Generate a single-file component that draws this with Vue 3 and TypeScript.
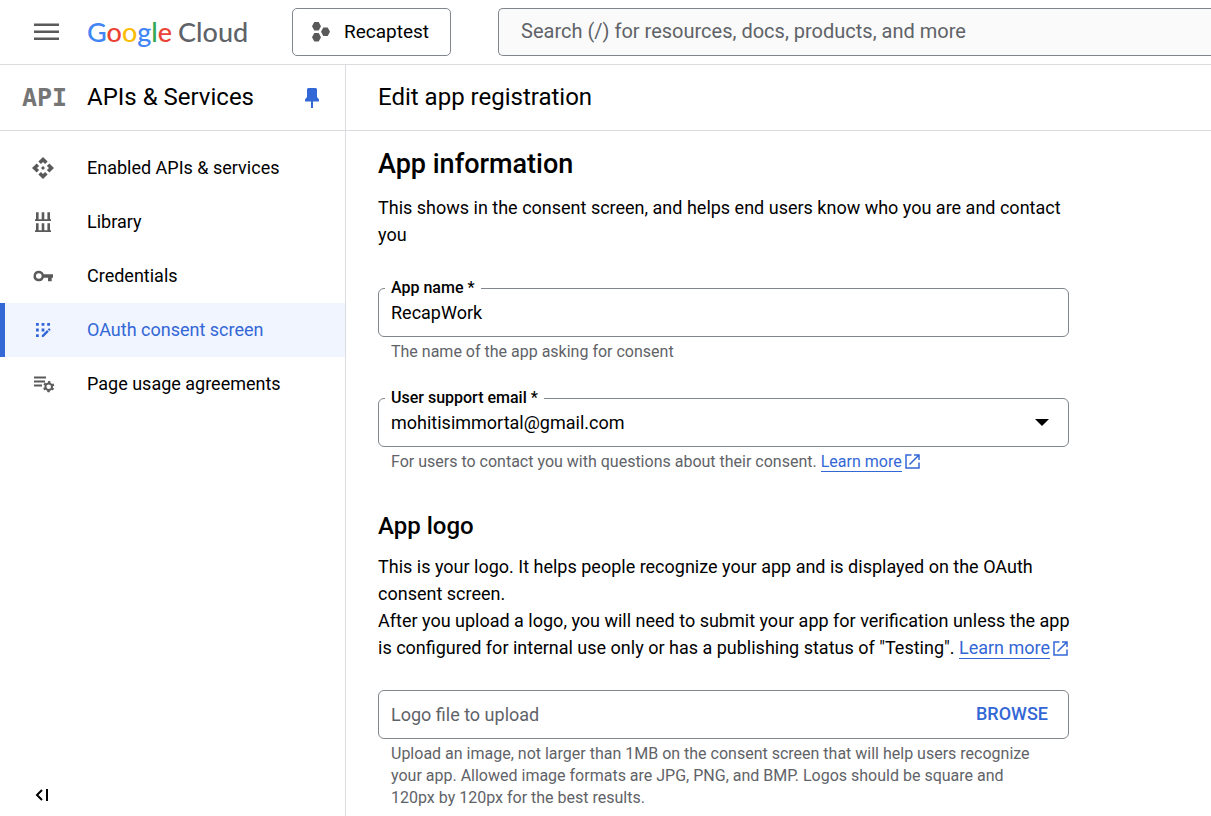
<script setup lang="ts">
import { ref } from 'vue'

interface NavItem {
  id: string
  label: string
}

const navItems: NavItem[] = [
  { id: 'enabled', label: 'Enabled APIs & services' },
  { id: 'library', label: 'Library' },
  { id: 'credentials', label: 'Credentials' },
  { id: 'consent', label: 'OAuth consent screen' },
  { id: 'agreements', label: 'Page usage agreements' },
]

const active = ref('consent')
const search = ref('')
const appName = ref('RecapWork')
const emails: string[] = ['mohitisimmortal@gmail.com']
const supportEmail = ref(emails[0])
const logoFile = ref('')
</script>

<template>
  <div class="page">
    <header class="topbar">
      <button class="icon-button menu" type="button" aria-label="Main menu">
        <svg width="26" height="18" viewBox="0 0 26 18" fill="#5a5a5a">
          <path d="M0 0.500h25v2.500H0zM0 7.500h25V10H0zM0 14.500h25V17H0z" />
        </svg>
      </button>
      <a class="brand" href="#" aria-label="Google Cloud">
        <span class="g-blue">G</span><span class="g-red">o</span><span class="g-yellow">o</span><span class="g-blue">g</span><span class="g-green">l</span><span class="g-red">e</span><span class="cloud">Cloud</span>
      </a>
      <button class="project" type="button">
        <svg width="18" height="20" viewBox="0 0 18 20" fill="#5a5a5a">
          <path d="M2.300 0h4.400L9 4.300 6.700 8.600H2.300L0 4.300zM11.300 5.500h4.400L18 9.800l-2.300 4.300h-4.400L9 9.800zM2.300 10.900h4.400L9 15.200l-2.300 4.300H2.300L0 15.200z" />
        </svg>
        <span>Recaptest</span>
      </button>
      <input v-model="search" class="search" type="search" aria-label="Search" placeholder="Search (/) for resources, docs, products, and more" />
    </header>

    <div class="body">
      <aside class="sidebar">
        <div class="side-head">
          <span class="api-logo" aria-hidden="true">API</span>
          <h2 class="side-title">APIs &amp; Services</h2>
          <button class="icon-button" type="button" aria-label="Unpin section">
            <svg width="16" height="20" viewBox="0 0 16 20" fill="#3367d6">
              <path d="M4.500 0h7Q13 0 13 1.500V9l2 2.500v2H9V20H7v-6.500H1v-2L3 9V1.500Q3 0 4.500 0z" />
            </svg>
          </button>
        </div>

        <nav class="nav" aria-label="APIs and services">
          <a
            v-for="item in navItems"
            :key="item.id"
            href="#"
            class="nav-item"
            :class="{ active: item.id === active }"
            :aria-current="item.id === active ? 'page' : undefined"
            @click.prevent="active = item.id"
          >
            <svg class="nav-icon" width="24" height="24" viewBox="0 0 24 24" fill="currentColor">
              <path v-if="item.id === 'enabled'" d="M14 12l-2 2-2-2 2-2 2 2zm-2-6l2.120 2.120 2.500-2.500L12 1 7.380 5.620l2.500 2.500L12 6zm-6 6l2.120-2.120-2.500-2.500L1 12l4.620 4.620 2.500-2.500L6 12zm12 0l-2.120 2.120 2.500 2.500L23 12l-4.620-4.620-2.500 2.500L18 12zm-6 6l-2.120-2.120-2.500 2.500L12 23l4.620-4.620-2.500-2.500L12 18z" />
              <path v-else-if="item.id === 'library'" d="M5 2.300h2.600v7h3.100v-7h2.600v7h3.100v-7H19v7h1V11H4V9.300h1zM5 13.300h2.600v7h3.100v-7h2.600v7h3.100v-7H19v7h1V22H4v-1.700h1z" />
              <path v-else-if="item.id === 'credentials'" fill-rule="evenodd" d="M7.800 6.700a5.300 5.300 0 0 1 5 3.500H22v3.600h-1.300v3.400H17v-3.400h-4.200a5.300 5.300 0 1 1-5-7.100zM7.800 9.200a2.800 2.800 0 1 0 0 5.600 2.800 2.800 0 0 0 0-5.600z" />
              <g v-else-if="item.id === 'consent'">
                <path d="M5 5h2.800v2.800H5zM10.600 5h2.800v2.800h-2.800zM16.200 5H19v2.800h-2.800zM5 10.600h2.800v2.800H5zM10.600 10.600h2.800v2.800h-2.800zM5 16.200h2.800V19H5z" />
                <path d="M10.800 17.300l5.300-5.300 1.700 1.700-5.300 5.300h-1.700zM16.700 11.400l.9-.9q.5-.5 1 0l.7.7q.5.500 0 1l-.9.900z" />
              </g>
              <g v-else>
                <path d="M3 4.500h12v2H3zM3 8.500h11v2H3zM3 12.500h8v2H3z" />
                <circle cx="17.700" cy="14.700" r="3.300" fill="none" stroke="currentColor" stroke-width="2" />
                <circle cx="17.700" cy="14.700" r="4.700" fill="none" stroke="currentColor" stroke-width="1.800" stroke-dasharray="2.400 2.522" transform="rotate(15 17.700 14.700)" />
              </g>
            </svg>
            <span class="nav-label">{{ item.label }}</span>
          </a>
        </nav>

        <button class="icon-button collapse" type="button" aria-label="Collapse navigation">
          <svg width="14" height="12" viewBox="0 0 14 12" fill="none" stroke="#000" stroke-width="2">
            <path d="M7 1L2 6l5 5M12 0v12" />
          </svg>
        </button>
      </aside>

      <main class="main">
        <h1 class="page-title">Edit app registration</h1>
        <form class="content" @submit.prevent>
          <h2 class="section-title">App information</h2>
          <p class="text">This shows in the consent screen, and helps end users know who you are and contact you</p>

          <div class="field first">
            <label class="floating" for="app-name">App name *</label>
            <input id="app-name" v-model="appName" class="control" type="text" aria-describedby="app-name-hint" />
          </div>
          <p id="app-name-hint" class="hint">The name of the app asking for consent</p>

          <div class="field second">
            <label class="floating" for="support-email">User support email *</label>
            <select id="support-email" v-model="supportEmail" class="control" aria-describedby="email-hint">
              <option v-for="email in emails" :key="email" :value="email">{{ email }}</option>
            </select>
            <svg class="caret" width="14" height="7" viewBox="0 0 14 7"><path d="M0 0h14L7 7z" /></svg>
          </div>
          <p id="email-hint" class="hint">
            For users to contact you with questions about their consent.
            <a class="link" href="#"><span>Learn more</span><svg class="external" width="15" height="15" viewBox="0 0 15 15" fill="none" stroke="currentColor" stroke-width="1.500"><path d="M6.500 1H1v13h13V8.500M9 1h5v5M14 1L4.500 10.500" /></svg></a>
          </p>

          <h3 class="sub-title">App logo</h3>
          <p class="text">
            This is your logo. It helps people recognize your app and is displayed on the OAuth consent screen.<br />
            After you upload a logo, you will need to submit your app for verification unless the app is configured for internal use only or has a publishing status of "Testing".
            <a class="link" href="#"><span>Learn more</span><svg class="external" width="15" height="15" viewBox="0 0 15 15" fill="none" stroke="currentColor" stroke-width="1.500"><path d="M6.500 1H1v13h13V8.500M9 1h5v5M14 1L4.500 10.500" /></svg></a>
          </p>

          <div class="field upload">
            <input v-model="logoFile" class="control" type="text" aria-label="Logo file to upload" placeholder="Logo file to upload" aria-describedby="logo-hint" />
            <button class="browse" type="button">BROWSE</button>
          </div>
          <p id="logo-hint" class="hint">
            Upload an image, not larger than 1MB on the consent screen that will help users recognize your app. Allowed image formats are JPG, PNG, and BMP. Logos should be square and 120px by 120px for the best results.
          </p>
        </form>
      </main>
    </div>
  </div>
</template>

<style>
html,
body {
  margin: 0;
}
</style>

<style scoped>
.page {
  display: flex;
  flex-direction: column;
  min-height: 100vh;
  background: #fff;
  color: #000;
  font-family: Roboto, 'Liberation Sans', sans-serif;
  font-size: 18px;
}

.page * {
  box-sizing: border-box;
}

button,
input,
select {
  font: inherit;
  color: inherit;
}

.icon-button {
  display: flex;
  padding: 0;
  border: 0;
  background: none;
}

.topbar {
  display: flex;
  align-items: center;
  flex: none;
  height: 65px;
  padding-left: 34px;
  border-bottom: 1px solid #dadce0;
}

.menu {
  width: 53px;
}

.brand {
  width: 205px;
  font-family: Lato, sans-serif;
  font-size: 27px;
  line-height: 36px;
  text-decoration: none;
  white-space: nowrap;
}

.g-blue { color: #4285f4; }
.g-red { color: #ea4335; }
.g-yellow { color: #fbbc04; }
.g-green { color: #34a853; }
.brand span { font-weight: 500; }
.cloud {
  margin-left: 6px;
  color: #5f6368;
}

.project {
  display: flex;
  align-items: center;
  gap: 14px;
  height: 48px;
  margin-right: 47px;
  padding: 0 21px 0 19px;
  border: 1px solid #80868b;
  border-radius: 5px;
  background: #fff;
  font-size: 19px;
}

.project span,
.nav-label {
  padding-bottom: 2px;
}

.search {
  flex: 1;
  min-width: 0;
  height: 48px;
  padding: 0 22px 2px;
  border: 1px solid #80868b;
  border-right: 0;
  border-radius: 5px 0 0 5px;
  background: #fafafa;
  font-size: 20px;
  outline: 0;
}

.search::placeholder,
.control::placeholder {
  color: #5f6368;
  opacity: 1;
}

.body {
  display: flex;
  flex: 1;
}

.sidebar {
  display: flex;
  flex-direction: column;
  flex: none;
  width: 346px;
  border-right: 1px solid #dadce0;
}

.side-head {
  display: flex;
  align-items: center;
  height: 66px;
  padding: 0 25px 0 22px;
  border-bottom: 1px solid #dadce0;
}

.api-logo {
  width: 65px;
  color: #757575;
  font-family: 'DejaVu Sans Mono', monospace;
  font-size: 25px;
  font-weight: 700;
}

.side-title {
  flex: 1;
  margin: 0;
  padding-bottom: 2px;
  font-size: 24px;
  font-weight: 400;
}

.nav {
  padding-top: 10px;
}

.nav-item {
  display: flex;
  align-items: center;
  gap: 32px;
  height: 54px;
  padding-left: 26px;
  border-left: 5px solid transparent;
  color: #000;
  text-decoration: none;
}

.nav-icon {
  color: #5a5a5a;
}

.active {
  border-color: #3367d6;
  background: #f0f5ff;
  color: #3367d6;
}

.active .nav-icon {
  color: #3367d6;
}

.collapse {
  margin: auto 0 15px 35px;
}

.main {
  flex: 1;
  min-width: 0;
}

.page-title {
  display: flex;
  align-items: center;
  height: 66px;
  margin: 0;
  padding: 0 0 2px 32px;
  border-bottom: 1px solid #dadce0;
  font-size: 24px;
  font-weight: 400;
}

.content {
  max-width: 740px;
  padding: 15px 0 0 32px;
}

.section-title {
  margin: 0 0 12px;
  font-size: 27px;
  font-weight: 500;
  line-height: 36px;
}

.text {
  margin: 0;
  line-height: 27px;
}

.field {
  position: relative;
  display: flex;
  height: 49px;
  max-width: 691px;
  border: 1px solid #80868b;
  border-radius: 6px;
}

.first { margin-top: 40px; }
.second { margin-top: 35px; }
.upload { margin-top: 29px; }

.floating {
  position: absolute;
  top: -12px;
  left: 6px;
  padding: 0 6px;
  background: #fff;
  font-size: 16px;
  font-weight: 500;
  line-height: 22px;
}

.control {
  flex: 1;
  min-width: 0;
  padding: 0 12px;
  border: 0;
  background: none;
  outline: 0;
  appearance: none;
}

.caret {
  position: absolute;
  top: 20px;
  right: 19px;
  pointer-events: none;
}

.browse {
  padding: 0 20px 3px;
  border: 0;
  background: none;
  color: #3367d6;
  font-weight: 500;
}

.hint {
  max-width: 664px;
  margin: 0;
  padding: 4px 0 0 13px;
  color: #5f6368;
  font-size: 16px;
  line-height: 22px;
}

.link {
  color: #3367d6;
  text-decoration: none;
  white-space: nowrap;
}

.link span {
  border-bottom: 1px solid #3367d6;
}

.external {
  margin-left: 3px;
  vertical-align: -2px;
}

.sub-title {
  margin: 37px 0 11px;
  font-size: 24px;
  font-weight: 500;
  line-height: 32px;
}
</style>
